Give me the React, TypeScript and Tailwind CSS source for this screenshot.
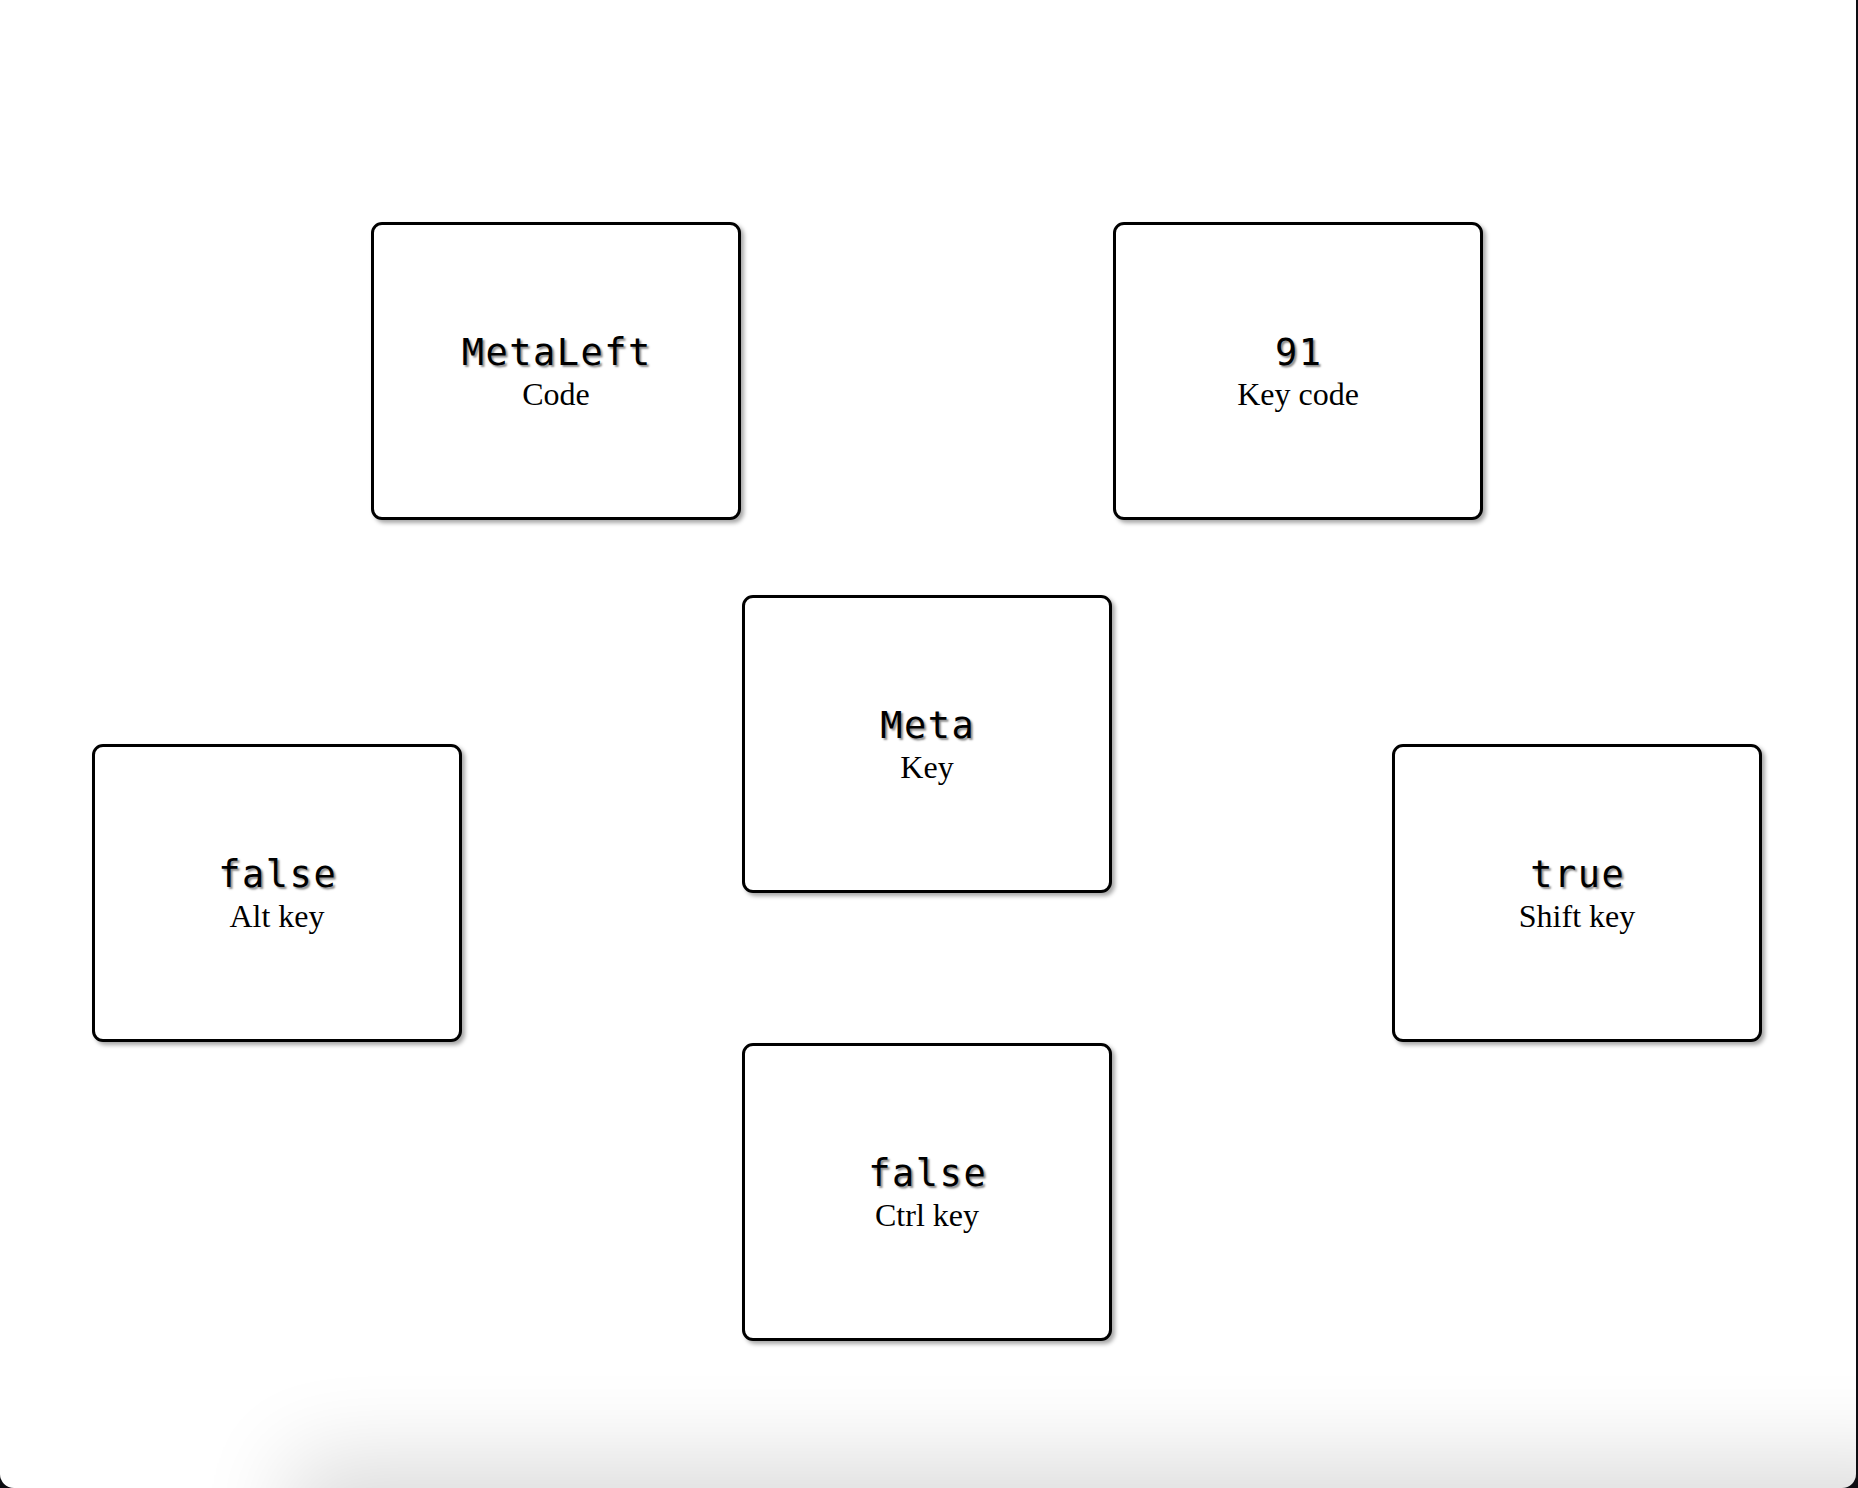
const cardBase =
  "w-[370px] h-[298px] shrink-0 flex flex-col items-center justify-center pt-[3px] bg-white border-[3px] border-black rounded-[11px] shadow-[3px_3px_4px_rgba(0,0,0,0.35)]";

function KeyCard({ value, label, className = "" }: { value: string; label: string; className?: string }) {
  return (
    <div className={`${cardBase} ${className}`}>
      <div className="font-['DejaVu_Sans_Mono',monospace] text-[37px] leading-[40px] tracking-[1.5px] pl-[1.5px] text-black [text-shadow:2px_2px_2px_rgba(0,0,0,0.45)]">
        {value}
      </div>
      <div className="font-['Liberation_Serif',serif] text-[32px] leading-[36px] mt-[3px] text-black">{label}</div>
    </div>
  );
}

export default function App() {
  return (
    <div className="w-[1858px] h-[1488px] bg-[#0d0d12] overflow-hidden">
      <div className="relative w-[1856px] h-[1488px] bg-white rounded-b-[14px] overflow-hidden pt-[222px]">
        {/* top row */}
        <div className="flex pl-[371px] gap-[372px]">
          <KeyCard value="MetaLeft" label="Code" />
          <KeyCard value="91" label="Key code" />
        </div>

        {/* middle row */}
        <div className="flex items-start pl-[92px] gap-[280px] mt-[75px]">
          <KeyCard value="false" label="Alt key" className="mt-[149px]" />
          <KeyCard value="Meta" label="Key" />
          <KeyCard value="true" label="Shift key" className="mt-[149px]" />
        </div>

        {/* bottom row */}
        <div className="flex pl-[742px] mt-[1px]">
          <KeyCard value="false" label="Ctrl key" />
        </div>

        {/* shadow cast along the bottom edge */}
        <div className="absolute left-[320px] right-[-60px] top-full h-[120px] shadow-[0_0_90px_30px_rgba(0,0,0,0.14)]" />
      </div>
    </div>
  );
}
